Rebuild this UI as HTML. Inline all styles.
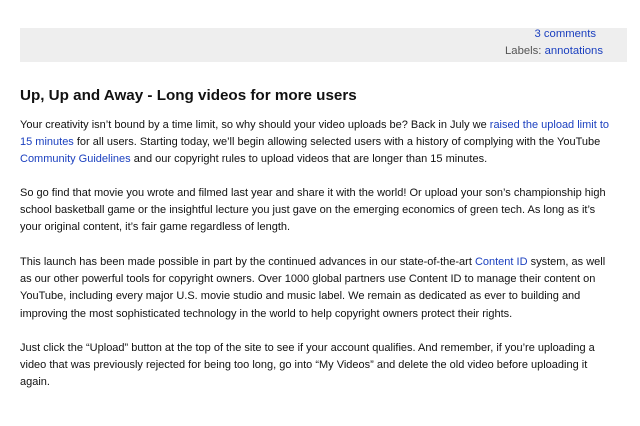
<!DOCTYPE html>
<html><head><style>
html,body{margin:0;padding:0;background:#fff;width:640px;height:426px;overflow:hidden}
body{font-family:"Liberation Sans",Arial,sans-serif;color:#111;font-size:11px}
.box{position:absolute;left:20px;top:28px;width:607px;height:34px;background:#eeeeee}
.r{position:absolute;font-size:11.3px;color:#555;white-space:nowrap}
a{color:#1a3fbf;text-decoration:none}
h1{position:absolute;left:20px;top:87px;margin:0;font-size:15.2px;font-weight:bold;color:#111;white-space:nowrap}
p{position:absolute;left:20px;margin:0;line-height:17.2px;white-space:nowrap;font-size:11px}
</style></head><body>
<div class="box">
<div class="r" style="top:0px;right:31px"><a>3 comments</a></div>
<div class="r" style="top:17px;right:24px">Labels: <a>annotations</a></div>
</div>
<h1>Up, Up and Away - Long videos for more users</h1>
<p style="top:117px">Your creativity isn’t bound by a time limit, so why should your video uploads be? Back in July we <a>raised the upload limit to</a><br><a>15 minutes</a> for all users. Starting today, we’ll begin allowing selected users with a history of complying with the YouTube<br><a>Community Guidelines</a> and our copyright rules to upload videos that are longer than 15 minutes.</p>
<p style="top:185px">So go find that movie you wrote and filmed last year and share it with the world! Or upload your son’s championship high<br>school basketball game or the insightful lecture you just gave on the emerging economics of green tech. As long as it’s<br>your original content, it’s fair game regardless of length.</p>
<p style="top:254px">This launch has been made possible in part by the continued advances in our state-of-the-art <a>Content ID</a> system, as well<br>as our other powerful tools for copyright owners. Over 1000 global partners use Content ID to manage their content on<br>YouTube, including every major U.S. movie studio and music label. We remain as dedicated as ever to building and<br>improving the most sophisticated technology in the world to help copyright owners protect their rights.</p>
<p style="top:340px">Just click the “Upload” button at the top of the site to see if your account qualifies. And remember, if you’re uploading a<br>video that was previously rejected for being too long, go into “My Videos” and delete the old video before uploading it<br>again.</p>
</body></html>
